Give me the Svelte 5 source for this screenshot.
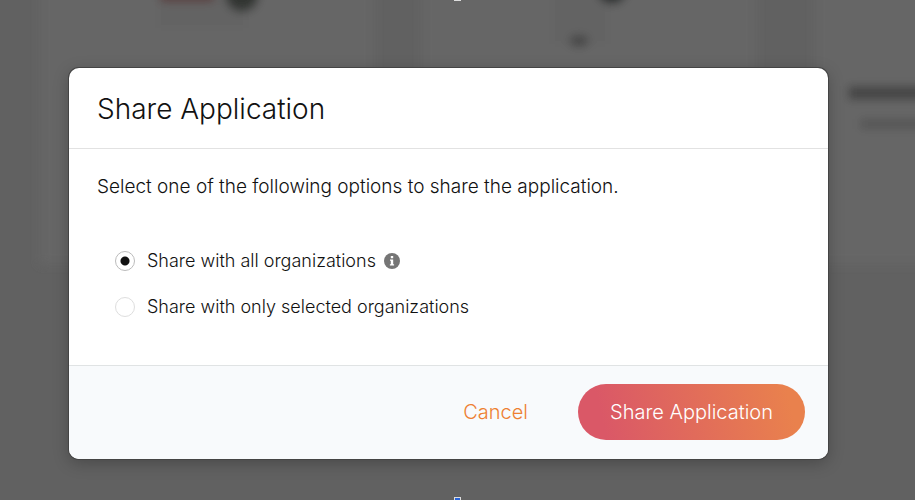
<script lang="ts">

    // STATE
    let shareType = $state('all');
    let open = $state(true);

    const options = [
        { value: 'all', label: 'Share with all organizations', hint: true },
        { value: 'selected', label: 'Share with only selected organizations', hint: false }
    ];

    function close() {
        open = false;
    }

</script>

<div class="page">

    <!-- dimmed application cards -->
    <svg class="backdrop" aria-hidden="true">
        <defs>
            <filter id="soft" x="-50%" y="-50%" width="200%" height="200%">
                <feGaussianBlur stdDeviation="5" />
            </filter>
        </defs>
        <g filter="url(#soft)">
            <rect x="40" y="-40" width="334" height="304" fill="#666666" />
            <rect x="422" y="-40" width="334" height="304" fill="#666666" />
            <rect x="815" y="-40" width="334" height="304" fill="#666666" />
            <rect x="158" y="-10" width="88" height="38" fill="#636363" />
            <rect x="160" y="-14" width="54" height="16" fill="#5a3c3c" />
            <circle cx="242" cy="-5" r="17" fill="#303532" />
            <rect x="552" y="-10" width="56" height="54" fill="#646464" />
            <circle cx="612" cy="-11" r="15" fill="#252b29" />
            <ellipse cx="579" cy="41" rx="10" ry="6" fill="#444444" />
            <rect x="848" y="86" width="90" height="14" fill="#444444" />
            <rect x="860" y="119" width="80" height="10" fill="#545454" />
        </g>
    </svg>

    {#if open}
        <div class="modal" role="dialog" aria-modal="true" aria-labelledby="title">

            <header>
                <h1 id="title">Share Application</h1>
            </header>

            <div class="content">
                <p id="prompt">Select one of the following options to share the application.</p>

                <div class="options" role="radiogroup" aria-labelledby="prompt">
                    {#each options as option}
                        <div class="option">
                            <input
                                type="radio"
                                id={option.value}
                                name="share"
                                value={option.value}
                                bind:group={shareType}
                            />
                            <label for={option.value}>{option.label}</label>
                            {#if option.hint}
                                <svg class="info" viewBox="0 0 16 16" aria-hidden="true">
                                    <circle cx="8" cy="8" r="8" fill="#757575" />
                                    <path d="M6.8 3h2.4v2.2H6.8zM6 6.4h3.2v4.8h.9v1.3H5.9v-1.3h.9V7.7H6z" fill="#fff" />
                                </svg>
                            {/if}
                        </div>
                    {/each}
                </div>
            </div>

            <footer>
                <button class="cancel" onclick={close}>Cancel</button>
                <button class="share" onclick={close}>Share Application</button>
            </footer>

        </div>
    {/if}

    <span class="handle top"></span>
    <span class="handle bottom"></span>

</div>

<style>

    .page {
        position: relative;
        box-sizing: border-box;
        min-height: 100vh;
        padding: 68px 87px 40px 69px;
        overflow: hidden;
        background: #616161;
        font-family: Inter, "Liberation Sans", sans-serif;
        font-weight: 300;
        color: #111;
    }

    .backdrop {
        position: absolute;
        inset: 0;
        width: 100%;
        height: 100%;
    }

    .modal {
        position: relative;
        overflow: hidden;
        border-radius: 10px;
        background: #fff;
        box-shadow: 0 0 0 1px #444, 0 4px 16px rgba(0, 0, 0, 0.25);
    }

    header {
        padding: 25px 28px 23px;
        border-bottom: 1px solid #e2e2e2;
    }

    h1 {
        margin: 0;
        font-size: 28px;
        line-height: 32px;
        font-weight: 300;
    }

    .content {
        padding: 24px 28px 44px;
    }

    p {
        margin: 0;
        font-size: 19px;
        line-height: 28px;
    }

    .options {
        display: flex;
        flex-direction: column;
        gap: 18px;
        padding: 46px 18px 0;
    }

    .option {
        display: flex;
        align-items: center;
        font-size: 18px;
        line-height: 28px;
    }

    input {
        appearance: none;
        width: 20px;
        height: 20px;
        margin: 0 12px 0 0;
        border: 1px solid #dedede;
        border-radius: 50%;
        background: #fff;
    }

    input:checked {
        border-color: #bbb;
        background: radial-gradient(circle, #111 4px, #fff 5px);
    }

    .info {
        width: 16px;
        height: 16px;
        margin-left: 8px;
    }

    footer {
        display: flex;
        justify-content: flex-end;
        align-items: center;
        gap: 18px;
        padding: 18px 23px 19px;
        border-top: 1px solid #e0e3e4;
        background: #f8fafc;
    }

    button {
        height: 56px;
        padding: 0 32px;
        border: none;
        border-radius: 28px;
        background: none;
        font: inherit;
        font-size: 20px;
        cursor: pointer;
    }

    .cancel {
        color: #ee8031;
    }

    .share {
        background: linear-gradient(77deg, #da5867 12%, #e9814d 92%);
        color: #fff;
    }

    .handle {
        position: absolute;
        left: 50%;
        box-sizing: border-box;
        width: 7px;
        height: 7px;
        margin-left: -4px;
        border: 1px solid #ddd;
        background: #2864d8;
    }

    .top {
        top: -6px;
    }

    .bottom {
        bottom: -4px;
    }

</style>
